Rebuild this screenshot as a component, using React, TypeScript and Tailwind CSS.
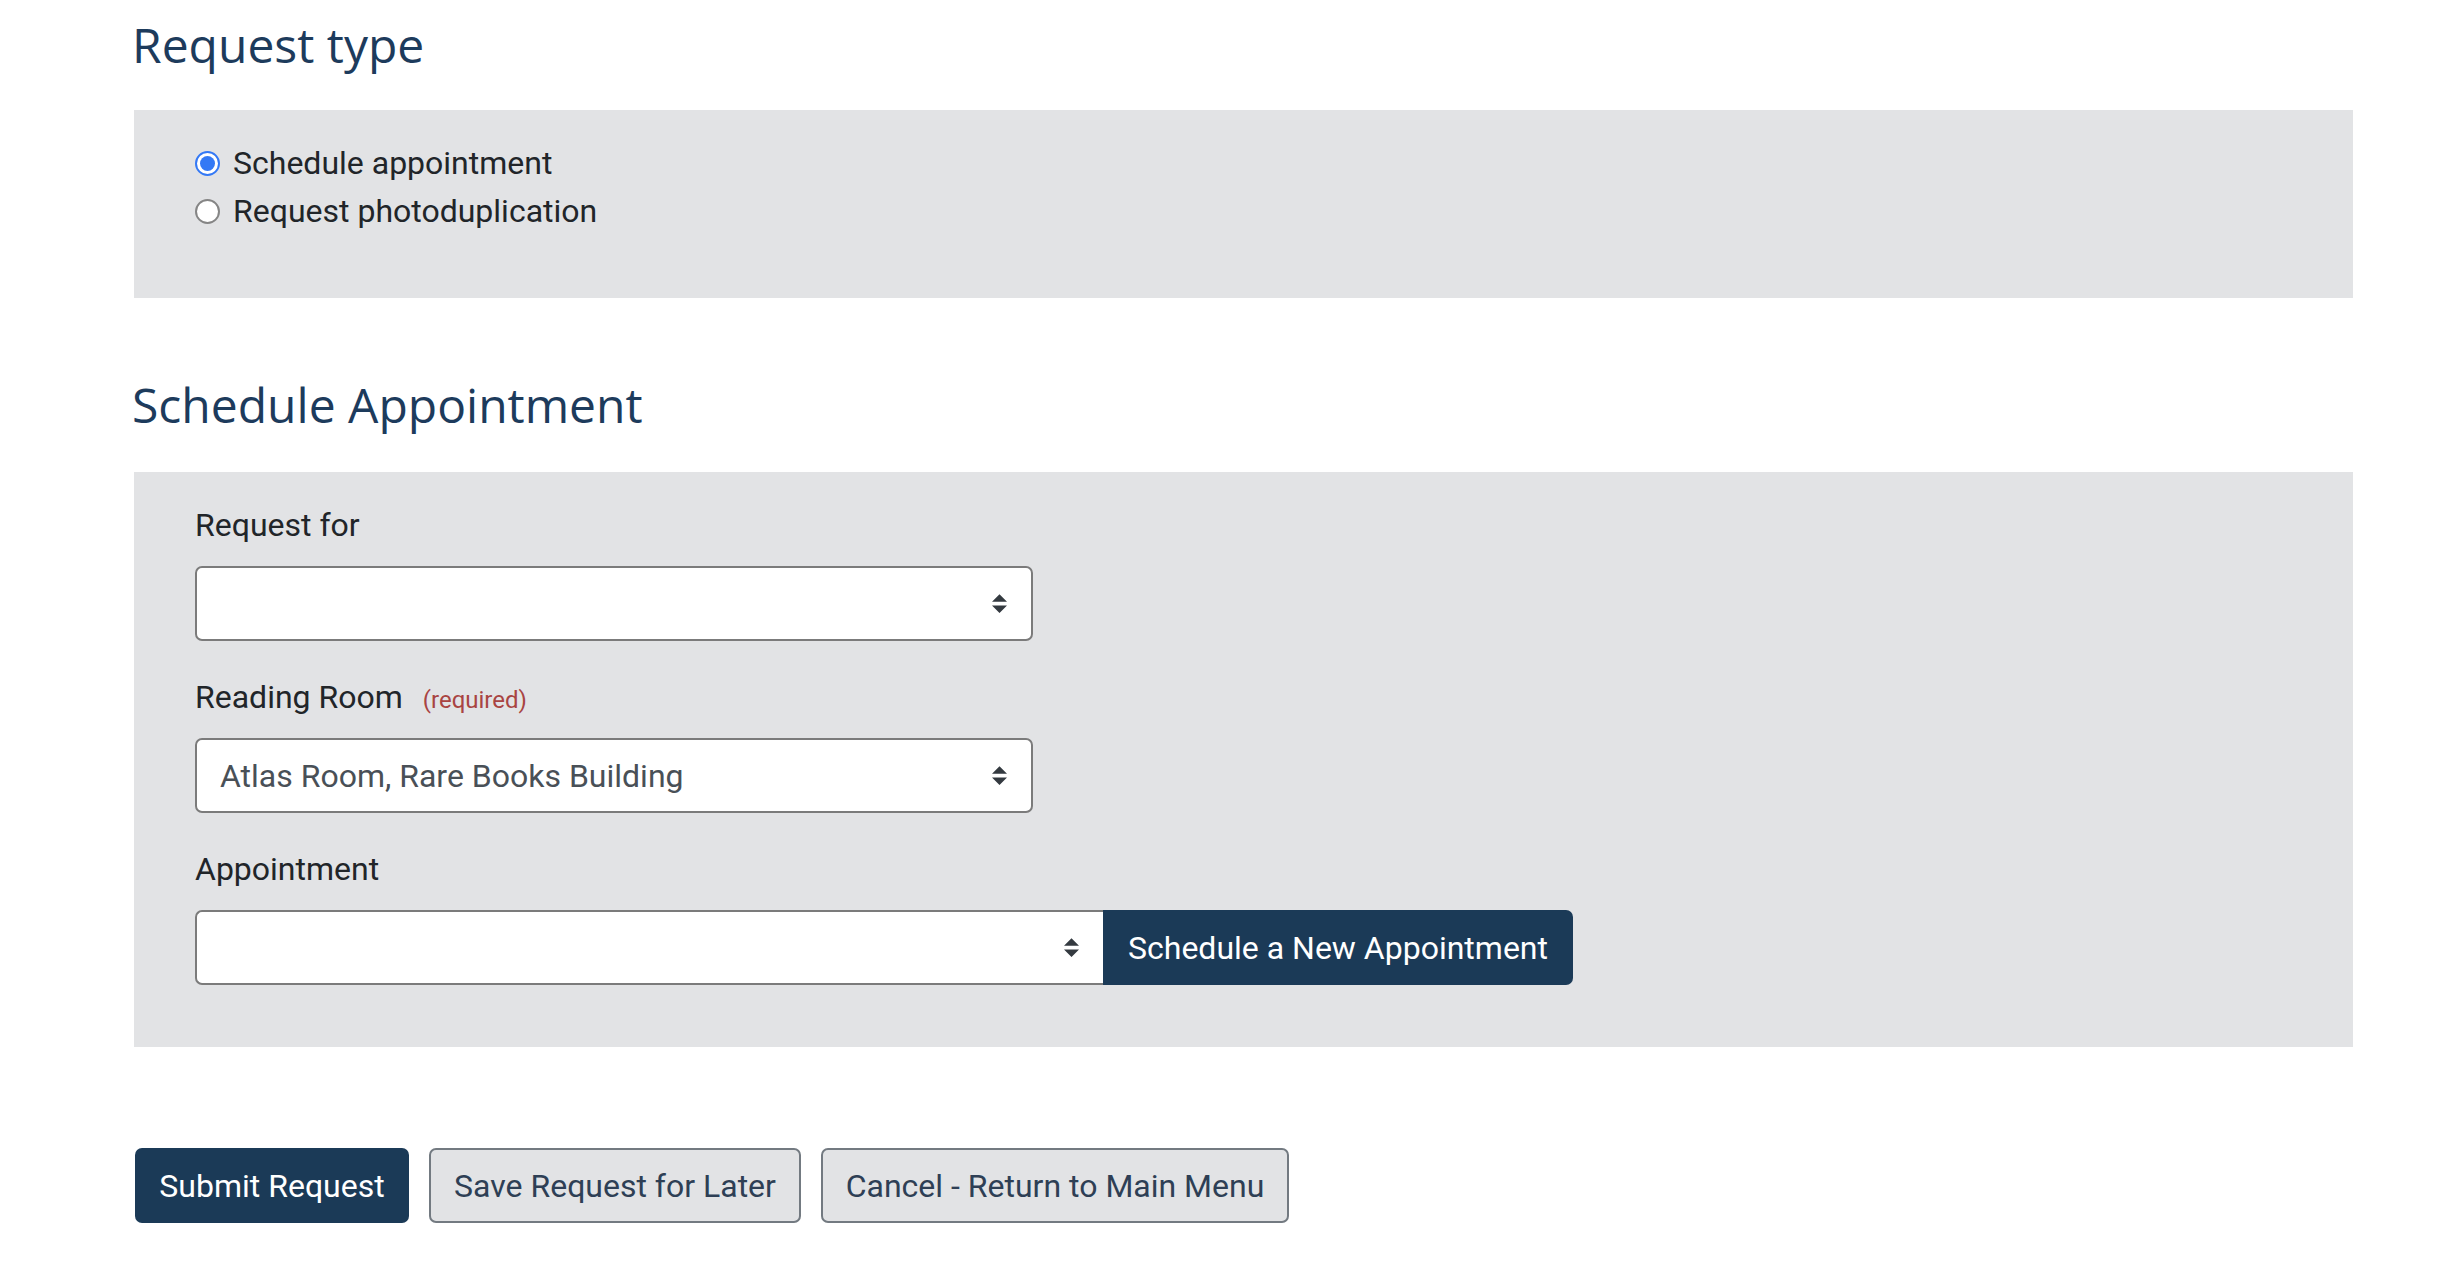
import React from "react";

function Arrows() {
  return (
    <svg width="15" height="19" viewBox="0 0 4 5" className="shrink-0">
      <path d="M2 0L0 2h4zm0 5L0 3h4z" fill="#343a40" />
    </svg>
  );
}

function Radio({ checked, label }: { checked: boolean; label: string }) {
  return (
    <label className="flex h-[48px] items-center gap-[13px]">
      {checked ? (
        <span className="flex h-[25px] w-[25px] items-center justify-center rounded-full border-2 border-[#3479f5] bg-white">
          <span className="h-[15px] w-[15px] rounded-full bg-[#3479f5]" />
        </span>
      ) : (
        <span className="h-[25px] w-[25px] rounded-full border-2 border-[#858585] bg-white" />
      )}
      <span>{label}</span>
    </label>
  );
}

export default function App() {
  return (
    <div className="min-h-screen bg-white font-['Roboto',sans-serif] text-[32px] leading-[48px] text-[#212529]">
      <div className="ml-[134px] w-[2219px] pt-[17px]">
        <h2 className="-ml-[2px] mb-[37px] font-['Open_Sans',sans-serif] text-[48px] font-normal leading-[56px] text-[#1d3b5c]">
          Request type
        </h2>
        <div className="bg-[#e2e3e5] px-[61px] pt-[29px] pb-[63px]">
          <Radio checked label="Schedule appointment" />
          <Radio checked={false} label="Request photoduplication" />
        </div>

        <h2 className="-ml-[2px] mt-[79px] mb-[39px] font-['Open_Sans',sans-serif] text-[48px] font-normal leading-[56px] text-[#1d3b5c]">
          Schedule Appointment
        </h2>
        <div className="bg-[#e2e3e5] px-[61px] pt-[29px] pb-[62px]">
          <div>
            <div className="mb-[17px] h-[48px]">Request for</div>
            <div className="flex h-[75px] w-[838px] items-center justify-between rounded-[7px] border-2 border-[#7b7b7b] bg-white pl-[23px] pr-[24px]">
              <span />
              <Arrows />
            </div>
          </div>
          <div className="mt-[32px]">
            <div className="mb-[17px] flex h-[48px] items-baseline">
              <span>Reading Room</span>
              <span className="ml-[20px] text-[24px] text-[#a94442]">(required)</span>
            </div>
            <div className="flex h-[75px] w-[838px] items-center justify-between rounded-[7px] border-2 border-[#7b7b7b] bg-white pl-[23px] pr-[24px] text-[#495057]">
              <span>Atlas Room, Rare Books Building</span>
              <Arrows />
            </div>
          </div>
          <div className="mt-[32px]">
            <div className="mb-[17px] h-[48px]">Appointment</div>
            <div className="flex h-[75px]">
              <div className="flex h-[75px] w-[908px] shrink-0 items-center justify-end rounded-l-[7px] border-2 border-r-0 border-[#7b7b7b] bg-white pr-[24px]">
                <Arrows />
              </div>
              <button className="flex h-[75px] w-[470px] shrink-0 items-center justify-center whitespace-nowrap rounded-r-[7px] bg-[#1b3a57] text-white">
                Schedule a New Appointment
              </button>
            </div>
          </div>
        </div>

        <div className="ml-[1px] mt-[101px] flex gap-[20px]">
          <button className="flex h-[75px] w-[274px] items-center justify-center whitespace-nowrap rounded-[7px] bg-[#1b3a57] text-white">
            Submit Request
          </button>
          <button className="flex h-[75px] w-[372px] items-center justify-center whitespace-nowrap rounded-[7px] border-2 border-[#737a81] bg-[#e2e3e5] text-[#2e3f55]">
            Save Request for Later
          </button>
          <button className="flex h-[75px] w-[468px] items-center justify-center whitespace-nowrap rounded-[7px] border-2 border-[#737a81] bg-[#e2e3e5] text-[#2e3f55]">
            Cancel - Return to Main Menu
          </button>
        </div>
      </div>
    </div>
  );
}
